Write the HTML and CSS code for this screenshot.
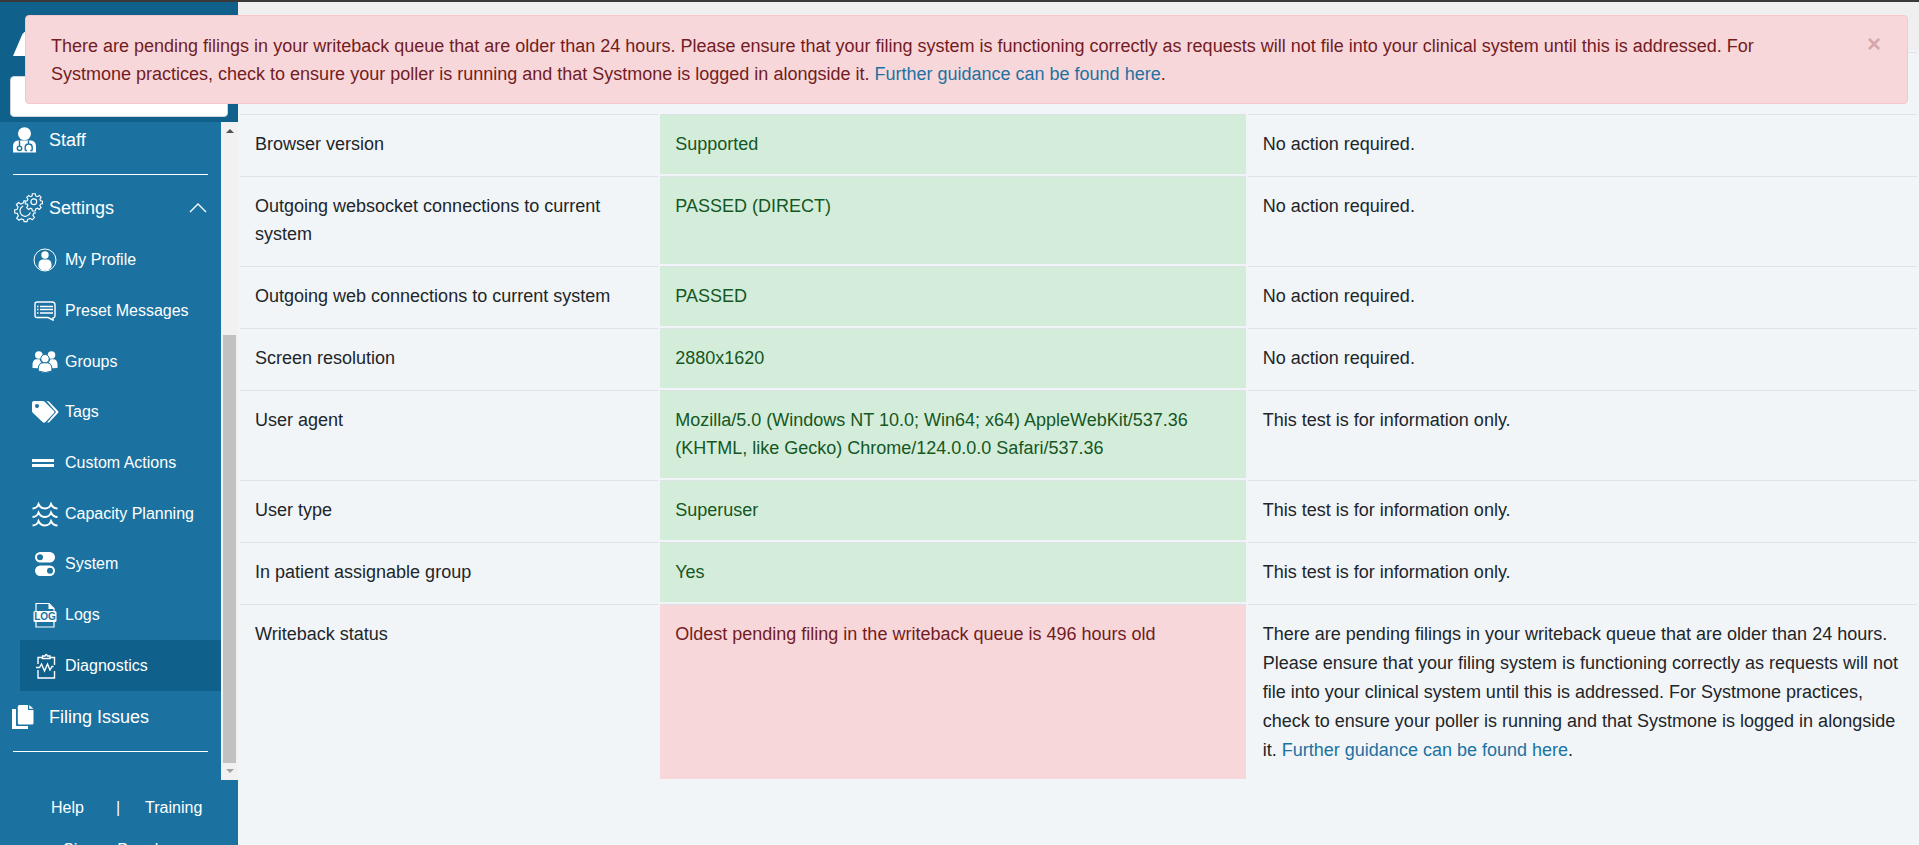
FILE: index.html
```html
<!DOCTYPE html>
<html lang="en">
<head>
    <meta charset="UTF-8">
    <meta name="viewport" content="width=device-width, initial-scale=1.0">
    <title>Diagnostics</title>
    <link rel="stylesheet" href="styles.css">
</head>
<body>
    <!-- Writeback alert -->
    <div class="alert" role="alert">
        <p>There are pending filings in your writeback queue that are older than 24 hours. Please ensure that your filing system is functioning correctly as requests will not file into your clinical system until this is addressed. For Systmone practices, check to ensure your poller is running and that Systmone is logged in alongside it. <a href="#">Further guidance can be found here</a>.</p>
        <button type="button" class="close" aria-label="Close">&times;</button>
    </div>

    <div class="layout">
        <!-- Sidebar -->
        <aside class="sidebar">
            <div class="sidebar-header">
                <svg class="logo" width="60" height="26" viewBox="0 0 60 26"><path d="M0 25 9 4Q11 0 15 0h40v25z" fill="#fff"/></svg>
                <input type="text" class="search" aria-label="Search">
            </div>

            <div class="sidebar-scroll">
                <nav class="menu">
                    <a href="#" class="menu-item staff">
                        <svg class="icon" width="24" height="26" viewBox="0 0 24 26"><circle cx="11.500" cy="6.700" r="6.500" fill="#fff"/><path d="M0 25.500v-6q0-5.500 5-6h13q5 .5 5 6v6z" fill="#fff"/><g fill="none" stroke="#1b72a1" stroke-width="1.400"><path d="M6.500 13.500v5.500"/><circle cx="6.500" cy="21.300" r="2.200"/><path d="M15.500 13.500v3.500M12.500 23.500h1.500M12.200 23.500v-3q0-3.500 3.500-3.500t3.500 3.500v3M17.300 23.500h2"/></g></svg>
                        <span>Staff</span>
                    </a>
                    <hr>
                    <a href="#" class="menu-item settings">
                        <svg class="icon wide" width="30" height="30" viewBox="-1 0 31 31" fill="none" stroke="#fff" stroke-width="1.200"><path d="M12 8.500 10.500 8 9.500 10.500 7 11.500 4.800 9.800 2.500 12l1.700 2.300L3.200 17 .800 17.300v3.400l2.700.500 1 2.400L2.800 26l2.400 2.200 2.300-1.500 2.500 1L10.500 29.500h3l.700-2.300 2.500-1 2.200 1.500 2.300-2.400-1.600-2.200 1-2.300 2-.3"/><path d="M9.500 13.500a5.500 5.500 0 1 0 7.500 6.500"/><circle cx="20.500" cy="9" r="3"/><path d="m19 .800 3 0 .5 2.200 1.700.800 2-1.300 1.900 2-1.300 1.900.7 1.600 2 .4v2.600l-2.100.500-.7 1.700 1.300 1.800-1.900 2-1.900-1.300-1.700.700-.5 2.200h-3l-.4-2.200-1.600-.7-1.900 1.300-2-1.900 1.300-1.900-.7-1.700-2-.4V8.500l2-.5.700-1.600-1.200-1.900 2-2 1.900 1.300 1.500-.7z"/></svg>
                        <span>Settings</span>
                        <svg class="chevron" width="18" height="10" viewBox="0 0 18 10"><path d="m1 9 8-8 8 8" fill="none" stroke="#fff" stroke-width="1.300"/></svg>
                    </a>

                    <div class="submenu">
                        <a href="#" class="submenu-item">
                            <svg class="icon" width="26" height="26" viewBox="0 0 26 26"><circle cx="13" cy="13" r="11" fill="none" stroke="#fff"/><circle cx="13" cy="8" r="3.700" fill="#fff"/><path d="M6.500 20v-3q.5-4.500 4.500-4.500h4q4 0 4.500 4.500v3q-2.500 3.500-6.500 3.500T6.500 20z" fill="#fff"/></svg>
                            <span>My Profile</span>
                        </a>
                        <a href="#" class="submenu-item">
                            <svg class="icon" width="26" height="26" viewBox="0 0 26 26" fill="none" stroke="#fff" stroke-width="1.400"><path d="M5 4h15q3 0 3 3v11q-.2 1.700-2 2v2L16 19.500H5q-2 0-2-2V6q0-2 2-2z"/><path d="M8 8.500h13M8 11.500h13M8 15h13M5 8.500h1.500M5 11.500h1.500M5 15h1.500"/></svg>
                            <span>Preset Messages</span>
                        </a>
                        <a href="#" class="submenu-item">
                            <svg class="icon" width="26" height="26" viewBox="0 0 26 26" fill="#fff"><circle cx="6.800" cy="6" r="3.800"/><circle cx="19.500" cy="6" r="3.800"/><path d="M.5 19v-4q.5-4.500 4-4.700h3l2 4q-3 1-3.500 5zM25.500 19v-4q-.5-4.500-4-4.700h-3l-2 4q3 1 3.500 5z"/><g stroke="#1b72a1" stroke-width="1"><circle cx="13" cy="9.700" r="4.200"/><path d="M6.300 22v-3q.4-5 4.700-5.200h4.300q4 .2 4.600 5.200v3q-6.500 3-13.600 0z"/></g></svg>
                            <span>Groups</span>
                        </a>
                        <a href="#" class="submenu-item">
                            <svg class="icon" width="28" height="26" viewBox="0 0 28 26"><path d="M0 4q0-2 2-2h8.500q1.500 0 2.500 1l9 9q1 1 0 2l-8.500 9q-1.500 1.500-3 0L1 14q-1-1-1-2z" fill="#fff"/><circle cx="5" cy="7" r="2" fill="#1b72a1"/><path d="M14.500 2q2 0 3 1l8.500 9q1 1 0 2l-9 9.500h-2l9-10.500z" fill="#fff"/></svg>
                            <span>Tags</span>
                        </a>
                        <a href="#" class="submenu-item">
                            <svg class="icon" width="28" height="26" viewBox="0 0 28 26" fill="#fff"><path d="M0 9h22v3H0zM0 14h22v3H0z"/></svg>
                            <span>Custom Actions</span>
                        </a>
                        <a href="#" class="submenu-item">
                            <svg class="icon" width="26" height="26" viewBox="0 0 26 26" fill="none" stroke="#fff" stroke-width="1.900"><path d="M.5 7.500q4.500 0 6-4.500 2 4.500 6.500 4.500T19 3q2 4.500 6.500 4.500M.5 16q4.500 0 6-4.500 2 4.500 6.500 4.500t6-4.500q2 4.500 6.500 4.500M.5 24.500q4.500 0 6-4.500 2 4.500 6.500 4.500t6-4.500q2 4.500 6.500 4.500"/></svg>
                            <span>Capacity Planning</span>
                        </a>
                        <a href="#" class="submenu-item">
                            <svg class="icon" width="26" height="26" viewBox="0 0 26 26"><rect x="3" y="1" width="20" height="10.500" rx="5.200" fill="#fff"/><rect x="3" y="14.500" width="20" height="10.500" rx="5.200" fill="#fff"/><g fill="#1b72a1"><circle cx="8" cy="6.200" r="3"/><circle cx="18" cy="19.700" r="3"/></g></svg>
                            <span>System</span>
                        </a>
                        <a href="#" class="submenu-item">
                            <svg class="icon" width="26" height="26" viewBox="0 0 26 26"><path d="M4 9V1.500h13l5 5V9M4 20v5h18v-5" fill="none" stroke="#fff" stroke-width="1.200"/><path d="M16.500 1v6H22.500z" fill="#fff"/><rect x="1.500" y="9" width="23" height="11" rx="1.500" fill="#fff"/><text x="13" y="18" text-anchor="middle" class="log-text">LOG</text></svg>
                            <span>Logs</span>
                        </a>
                        <a href="#" class="submenu-item active">
                            <svg class="icon" width="26" height="26" viewBox="0 0 26 26" fill="none" stroke="#fff" stroke-width="1.400"><path d="M10 4.500H6V11M18 4.500h4.500V12M6 17v8h16.500v-7"/><path d="M10.500 5.500V3h2.500q1.200-3 2.400 0H18v2.500z"/><path d="M4 14.500h3.500l2-3.500 3 7 3-7 2.500 6 2-3.500h1.500"/></svg>
                            <span>Diagnostics</span>
                        </a>
                    </div>

                    <a href="#" class="menu-item filing">
                        <svg class="icon" width="24" height="26" viewBox="0 0 24 26" fill="#fff"><path d="M0 5h4v16q0 1 1 1h11v3H0z"/><path d="M7.500 1H16v5h5.500v13q0 1.500-1.500 1.500H7q-1.200 0-1.200-1.500V2.500Q5.800 1 7.500 1z"/><path d="M17.200 1v3.800H21.500z"/></svg>
                        <span>Filing Issues</span>
                    </a>
                    <hr>
                </nav>
                <div class="scrollbar">
                    <span class="arrow up"></span>
                    <span class="thumb"></span>
                    <span class="arrow down"></span>
                </div>
            </div>

            <footer class="sidebar-footer">
                <div class="footer-row"><a href="#">Help</a><span class="divider">|</span><a href="#">Training</a></div>
                <div class="footer-row second"><a href="#">Signup Panel</a></div>
            </footer>
        </aside>

        <!-- Diagnostics results -->
        <main class="content">
            <div class="topbar"></div>
            <table class="results">
                <colgroup>
                    <col class="col-test">
                    <col class="col-result">
                    <col class="col-action">
                </colgroup>
                <tbody>
                    <tr class="blank"><td></td><td></td><td></td></tr>
                    <tr>
                        <td>Browser version</td>
                        <td class="success">Supported</td>
                        <td>No action required.</td>
                    </tr>
                    <tr>
                        <td>Outgoing websocket connections to current system</td>
                        <td class="success">PASSED (DIRECT)</td>
                        <td>No action required.</td>
                    </tr>
                    <tr>
                        <td>Outgoing web connections to current system</td>
                        <td class="success">PASSED</td>
                        <td>No action required.</td>
                    </tr>
                    <tr>
                        <td>Screen resolution</td>
                        <td class="success">2880x1620</td>
                        <td>No action required.</td>
                    </tr>
                    <tr>
                        <td>User agent</td>
                        <td class="success">Mozilla/5.0 (Windows NT 10.0; Win64; x64) AppleWebKit/537.36 (KHTML, like Gecko) Chrome/124.0.0.0 Safari/537.36</td>
                        <td>This test is for information only.</td>
                    </tr>
                    <tr>
                        <td>User type</td>
                        <td class="success">Superuser</td>
                        <td>This test is for information only.</td>
                    </tr>
                    <tr>
                        <td>In patient assignable group</td>
                        <td class="success">Yes</td>
                        <td>This test is for information only.</td>
                    </tr>
                    <tr>
                        <td>Writeback status</td>
                        <td class="danger">Oldest pending filing in the writeback queue is 496 hours old</td>
                        <td class="guidance">There are pending filings in your writeback queue that are older than 24 hours. Please ensure that your filing system is functioning correctly as requests will not file into your clinical system until this is addressed. For Systmone practices, check to ensure your poller is running and that Systmone is logged in alongside it. <a href="#">Further guidance can be found here</a>.</td>
                    </tr>
                </tbody>
            </table>
        </main>
    </div>
</body>
</html>
```
FILE: styles.css
```css
/* Global Styles */
* {
    box-sizing: border-box;
}

body {
    margin: 0;
    font-family: Arial, "Liberation Sans", sans-serif;
    font-size: 18px;
    line-height: 28px;
    color: #212529;
    background: #f1f5f8;
    border-top: 2px solid #3a3838;
    height: 100vh;
    overflow: hidden;
}

a {
    color: #1b72a1;
    text-decoration: none;
}

.layout {
    display: flex;
    height: 100%;
    overflow: hidden;
}

/* Alert */
.alert {
    position: fixed;
    top: 15px;
    left: 25px;
    right: 11px;
    z-index: 10;
    display: flex;
    justify-content: space-between;
    padding: 16px 26px 15px 25px;
    background: #f8d7da;
    border: 1px solid #f5c6cb;
    border-radius: 4px;
    color: #721c24;
}

.alert p {
    margin: 0;
    padding-right: 90px;
}

.close {
    align-self: flex-start;
    padding: 0;
    border: none;
    background: none;
    font-family: inherit;
    font-size: 24px;
    font-weight: bold;
    line-height: 24px;
    color: #721c24;
    opacity: 0.25;
    cursor: pointer;
}

/* Sidebar */
.sidebar {
    display: flex;
    flex-direction: column;
    flex: 0 0 238px;
    background: #1b72a1;
    color: #fff;
}

.sidebar a {
    color: #fff;
}

.sidebar-header {
    display: flex;
    flex-direction: column;
    gap: 19px;
    height: 120px;
    flex-shrink: 0;
    padding: 29px 10px 5px;
    background: #0f608b;
}

.logo {
    margin-left: 3px;
}

.search {
    width: 100%;
    height: 41px;
    border: 1px solid #ced4da;
    border-radius: 4px;
    background: #fff;
}

.sidebar-scroll {
    display: flex;
    height: 658px;
    flex-shrink: 0;
}

.menu {
    flex: 1;
    overflow: hidden;
}

.menu hr {
    margin: 0 13px;
    border: none;
    border-top: 1px solid #fff;
}

.menu-item {
    display: flex;
    align-items: center;
    padding: 0 14px 0 13px;
}

.menu-item .icon {
    flex-shrink: 0;
    margin-right: 12px;
}

.menu-item .icon.wide {
    margin-right: 6px;
}

.menu-item.staff {
    height: 52px;
    padding-bottom: 16px;
}

.menu-item.settings {
    height: 60px;
    padding-top: 6px;
}

.menu-item.filing {
    height: 60px;
    padding-bottom: 8px;
    padding-left: 12px;
}

.menu-item.filing .icon {
    margin-right: 13px;
}

.chevron {
    margin-left: auto;
}

.submenu {
    display: flex;
    flex-direction: column;
    height: 456px;
}

.submenu-item {
    display: flex;
    flex: 1;
    align-items: center;
    margin-left: 20px;
    padding-left: 12px;
    font-size: 16px;
}

.submenu-item .icon {
    flex-shrink: 0;
    margin-right: 7px;
}

.submenu-item .icon[width="28"] {
    margin-right: 5px;
}

.submenu-item.active {
    background: #0f608b;
}

.log-text {
    font-size: 10px;
    font-weight: bold;
    fill: #1b72a1;
}

.scrollbar {
    display: flex;
    flex-direction: column;
    align-items: center;
    width: 17px;
    padding: 7px 0;
    background: #f1f1f1;
}

.arrow {
    border: 4px solid transparent;
}

.arrow.up {
    border-top: none;
    border-bottom-color: #505050;
}

.arrow.down {
    border-bottom: none;
    border-top-color: #a3a3a3;
}

.thumb {
    width: 13px;
    height: 428px;
    margin: auto 0 6px;
    background: #c1c1c1;
}

.sidebar-footer {
    padding: 14px 0 0 51px;
    font-size: 16px;
}

.footer-row {
    display: flex;
    margin-bottom: 14px;
}

.footer-row.second {
    padding-left: 12px;
}

.divider {
    padding: 0 25px 0 32px;
}

/* Results table */
.content {
    flex: 1;
}

.topbar {
    height: 48px;
    background: #efefef;
}

.results {
    width: 100%;
    table-layout: fixed;
    border-spacing: 2px;
}

.col-test {
    width: 25%;
}

.col-result {
    width: 35%;
}

.results td {
    padding: 15px 15px 16px;
    border-top: 1px solid #dee2e6;
    vertical-align: top;
}

.results .blank td {
    height: 60px;
}

.results .guidance {
    padding-bottom: 14px;
    line-height: 29px;
}

.success {
    background: #d4edda;
    color: #155724;
}

.danger {
    background: #f8d7da;
    color: #721c24;
}
```
